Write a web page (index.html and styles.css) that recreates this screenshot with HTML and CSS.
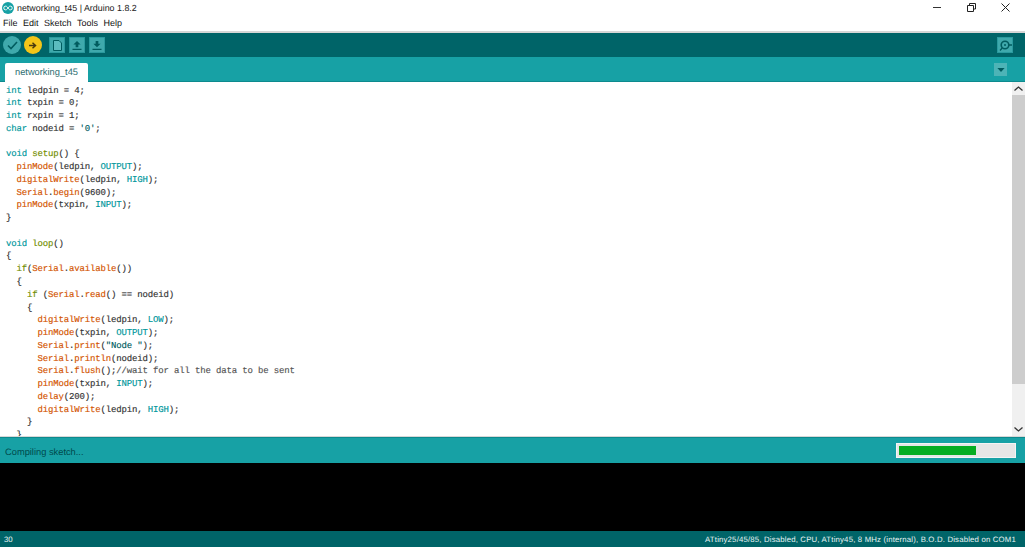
FILE: index.html
```html
<!DOCTYPE html>
<html lang="en">
<head>
<meta charset="utf-8">
<title>networking_t45 | Arduino 1.8.2</title>
<link rel="stylesheet" href="styles.css">
</head>
<body>
<div class="app">
  <header class="titlebar">
    <div class="title-left">
      <svg class="app-icon" width="12" height="12" viewBox="0 0 13 13"><circle cx="6.5" cy="6.5" r="6.5" fill="#17a1a5"/><path d="M6.500 6.500c-1-1.600-1.700-2-2.600-2a2 2 0 0 0 0 4c.9 0 1.600-.4 2.600-2s1.700-2 2.600-2a2 2 0 0 1 0 4c-.9 0-1.600-.4-2.600-2z" fill="none" stroke="#fff" stroke-width="1"/></svg>
      <span class="title-text">networking_t45 | Arduino 1.8.2</span>
    </div>
    <div class="win-controls">
      <svg width="9" height="9" viewBox="0 0 9 9"><path d="M0 4.500h8" stroke="#333" fill="none"/></svg>
      <svg width="9" height="9" viewBox="0 0 9 9"><path d="M2.500 2V.5h6v5.500H6.500M.5 2.500h6v6h-6z" stroke="#222" fill="none"/></svg>
      <svg width="9" height="9" viewBox="0 0 9 9"><path d="M.5.5l8 8M8.500.5l-8 8" stroke="#222" fill="none"/></svg>
    </div>
  </header>
  <nav class="menubar"><span>File</span><span>Edit</span><span>Sketch</span><span>Tools</span><span>Help</span></nav>
  <div class="toolbar">
    <div class="tool-group">
      <button class="round-btn"><svg width="11" height="9" viewBox="0 0 11 9"><path d="M1 4.500l3 3 6-6.500" stroke="#005c5f" stroke-width="1.600" fill="none"/></svg></button>
      <button class="round-btn active"><svg width="8" height="7" viewBox="0 0 8 7"><path d="M0 3.500h6M3.500.8l3 2.700-3 2.700" stroke="#4a3a10" stroke-width="1.500" fill="none"/></svg></button>
      <button class="square-btn first"><svg width="9" height="11" viewBox="0 0 9 11"><path d="M.5.5h5.500l2.500 2.500v7.500h-8z" stroke="#005c5f" fill="#5cbcbf"/></svg></button>
      <button class="square-btn"><svg width="10" height="9" viewBox="0 0 10 10"><path d="M5 0l4 4H6.500v3h-3V4H1zM0 8.500h10V10H0z" fill="#005c5f"/></svg></button>
      <button class="square-btn"><svg width="10" height="9" viewBox="0 0 10 10"><path d="M3.500 0h3v3H9L5 7 1 3h2.500zM0 8.500h10V10H0z" fill="#005c5f"/></svg></button>
    </div>
    <button class="square-btn serial"><svg width="13" height="13" viewBox="0 0 13 13"><circle cx="6" cy="6" r="3.800" stroke="#005c5f" stroke-width="1.600" fill="none"/><circle cx="6" cy="6" r="1" fill="#005c5f"/><path d="M3.200 9L1 11.500M10 6h3" stroke="#005c5f" stroke-width="1.300" fill="none"/></svg></button>
  </div>
  <div class="tabbar">
    <div class="tab">networking_t45</div>
    <div class="tab-menu"><svg width="8" height="4" viewBox="0 0 9 5"><path d="M0 0h9L4.500 5z" fill="#005c5f"/></svg></div>
  </div>
  <main class="editor">
<pre class="code"><span class="ty">int</span> ledpin = 4;
<span class="ty">int</span> txpin = 0;
<span class="ty">int</span> rxpin = 1;
<span class="ty">char</span> nodeid = <span class="str">'0'</span>;

<span class="ty">void</span> <span class="st">setup</span>() {
  <span class="fn">pinMode</span>(ledpin, <span class="cn">OUTPUT</span>);
  <span class="fn">digitalWrite</span>(ledpin, <span class="cn">HIGH</span>);
  <span class="fn">Serial</span>.<span class="fn">begin</span>(9600);
  <span class="fn">pinMode</span>(txpin, <span class="cn">INPUT</span>);
}

<span class="ty">void</span> <span class="st">loop</span>()
{
  <span class="st">if</span>(<span class="fn">Serial</span>.<span class="fn">available</span>())
  {
    <span class="st">if</span> (<span class="fn">Serial</span>.<span class="fn">read</span>() == nodeid)
    {
      <span class="fn">digitalWrite</span>(ledpin, <span class="cn">LOW</span>);
      <span class="fn">pinMode</span>(txpin, <span class="cn">OUTPUT</span>);
      <span class="fn">Serial</span>.<span class="fn">print</span>(<span class="str">"Node "</span>);
      <span class="fn">Serial</span>.<span class="fn">println</span>(nodeid);
      <span class="fn">Serial</span>.<span class="fn">flush</span>();<span class="cm">//wait for all the data to be sent</span>
      <span class="fn">pinMode</span>(txpin, <span class="cn">INPUT</span>);
      <span class="fn">delay</span>(200);
      <span class="fn">digitalWrite</span>(ledpin, <span class="cn">HIGH</span>);
    }
  }
}</pre>
    <div class="scrollbar">
      <div class="sb-btn"><svg width="9" height="5" viewBox="0 0 9 5"><path d="M.5 4.500l4-3.500 4 3.500" stroke="#333" stroke-width="1.300" fill="none"/></svg></div>
      <div class="sb-track"><div class="sb-thumb"></div></div>
      <div class="sb-btn"><svg width="9" height="5" viewBox="0 0 9 5"><path d="M.5.500l4 3.500 4-3.500" stroke="#333" stroke-width="1.300" fill="none"/></svg></div>
    </div>
  </main>
  <div class="status">
    <span class="status-text">Compiling sketch...</span>
    <div class="progress"><div class="progress-fill"></div></div>
  </div>
  <div class="console"></div>
  <footer class="footer">
    <span>30</span>
    <span class="board">ATtiny25/45/85, Disabled, CPU, ATtiny45, 8 MHz (internal), B.O.D. Disabled on COM1</span>
  </footer>
</div>
</body>
</html>
```
FILE: styles.css
```css
* { box-sizing: border-box; }
html, body { margin: 0; padding: 0; }
body { width: 1025px; height: 547px; overflow: hidden; background: #fff; font-family: "Liberation Sans", Arial, sans-serif; text-rendering: geometricPrecision; }
.app { display: flex; flex-direction: column; height: 547px; }

.titlebar { height: 17px; display: flex; justify-content: space-between; align-items: flex-start; background: #fff; }
.title-left { display: flex; align-items: center; gap: 3px; padding: 2px 0 0 2px; }
.title-text { font-size: 8.900px; line-height: 12px; color: #222; }
.win-controls { display: flex; align-items: center; gap: 25px; padding: 3px 15px 0 0; }

.menubar { height: 14px; display: flex; gap: 5.500px; padding: 0 0 2px 3px; align-items: center; font-size: 9px; color: #111; background: #fff; }

.toolbar { height: 26px; flex: none; background: #006468; border-top: 2px solid #d6d6d6; display: flex; justify-content: space-between; align-items: center; padding: 0 12px 0 3px; }
.tool-group { display: flex; align-items: center; gap: 2px; }
button { padding: 0; border: 0; display: flex; align-items: center; justify-content: center; }
.round-btn { width: 18px; height: 18px; border-radius: 50%; background: #3fa9ac; margin-right: 1px; }
.round-btn.active { background: #f5c518; }
.square-btn { width: 16px; height: 16px; background: #3fa9ac; border: 1px solid #2a9a9e; margin-right: 2px; }
.square-btn.first { margin-left: 4px; }
.square-btn.serial { margin-right: 0; }

.tabbar { height: 25px; flex: none; background: #17a1a5; border-bottom: 1px solid #0d8a8e; display: flex; justify-content: space-between; align-items: flex-end; padding: 0 18px 0 5px; }
.tab { width: 83px; height: 19px; margin-bottom: -1px; background: #fff; border-radius: 2px 2px 0 0; font-size: 9.300px; color: #2d6d70; text-align: center; line-height: 19px; }
.tab-menu { width: 13px; height: 13px; background: #4db4b7; margin-bottom: 5px; display: flex; align-items: center; justify-content: center; }

.editor { height: 355px; flex: none; display: flex; background: #fff; overflow: hidden; border-bottom: 1px solid #d8d8d8; }
.code { flex: 1; margin: 0; padding: 2.500px 0 0 6px; overflow: hidden; font-family: "Liberation Mono", "Courier New", monospace; font-size: 9px; letter-spacing: -0.15px; line-height: 12.770px; color: #333; -webkit-text-stroke: 0.15px #333; }
.ty { color: #00979c; -webkit-text-stroke-color: #00979c; }
.st { color: #728e00; -webkit-text-stroke-color: #728e00; }
.fn { color: #d35400; -webkit-text-stroke-color: #d35400; }
.cn { color: #00979c; -webkit-text-stroke-color: #00979c; }
.str { color: #005c5f; -webkit-text-stroke-color: #005c5f; }
.cm { color: #555; -webkit-text-stroke-color: #555; }

.scrollbar { width: 13px; flex: none; display: flex; flex-direction: column; background: #f0f0f0; }
.sb-btn { height: 13px; flex: none; display: flex; align-items: center; justify-content: center; }
.sb-track { flex: 1; }
.sb-thumb { height: 289px; background: #cdcdcd; }

.status { height: 26px; flex: none; background: #17a1a5; border-top: 1px solid #0d8a8e; display: flex; justify-content: space-between; align-items: center; padding: 0 9px 0 5px; }
.status-text { font-size: 9.300px; color: #00494c; padding-top: 2px; }
.progress { width: 120px; height: 15px; background: #e6e6e6; border: 1px solid #f4f4f4; padding: 2px; }
.progress-fill { width: 77px; height: 100%; background: #06ad22; }

.console { flex: 1; background: #000; }

.footer { height: 16px; flex: none; background: #006468; display: flex; justify-content: space-between; align-items: center; padding: 1px 9px 0 4px; font-size: 7.800px; color: #e8f4f4; }
.board { letter-spacing: 0.17px; }
```
